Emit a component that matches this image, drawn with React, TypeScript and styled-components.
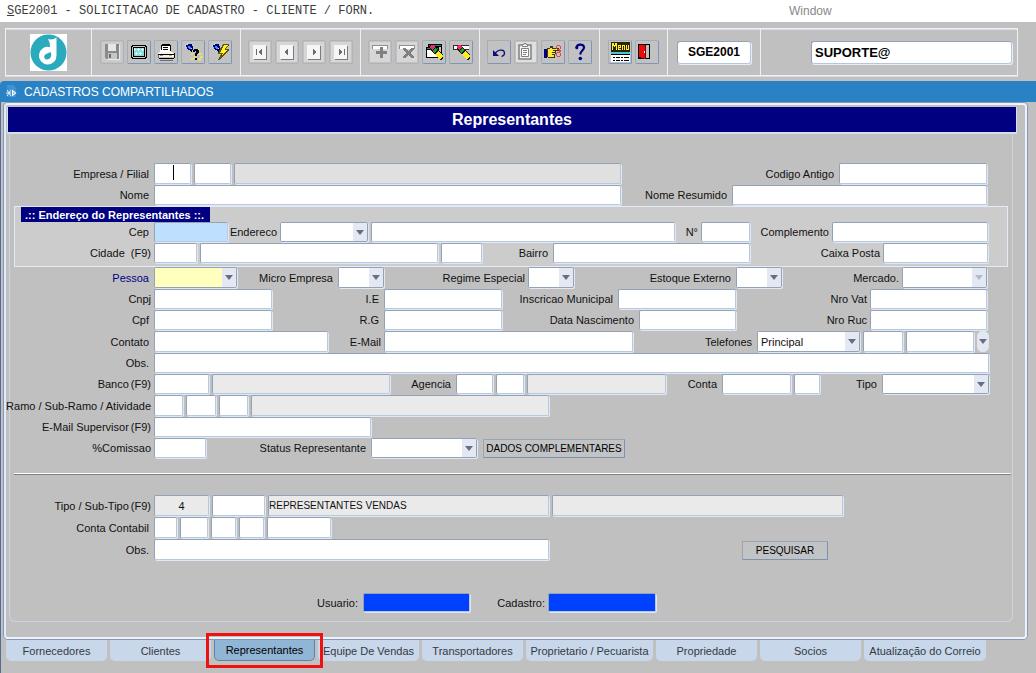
import React from "react";
import styled, { createGlobalStyle, css } from "styled-components";

const GlobalStyle = createGlobalStyle`
  *, *::before, *::after { box-sizing: border-box; }
  body {
    margin: 0;
    background: #c0c0c0;
    color: #111;
    font: 11px/14px "Liberation Sans", Arial, sans-serif;
  }
  input, select, button { font: inherit; color: inherit; margin: 0; }
`;

const Screen = styled.div`
  display: flex;
  flex-direction: column;
  min-height: 100vh;
`;

/* ---------- menu and toolbar ---------- */

const MenuBar = styled.nav`
  display: flex;
  align-items: center;
  height: 22px;
  padding-left: 7px;
  background: #fff;
`;

const ProgramName = styled.span`
  flex: 0 0 782px;
  color: #3c3c3c;
  font: 12px/14px "Liberation Mono", "Courier New", monospace;
`;

const MenuItem = styled.button`
  padding: 0;
  border: 0;
  background: none;
  color: #888;
  font-size: 12px;
`;

const Toolbar = styled.header`
  padding: 6px 18px 5px 5px;
`;

const ToolFrame = styled.div`
  display: flex;
  height: 48px;
  border: 1px solid #eef2f8;
  box-shadow: 0 1px 0 #d6dde6, inset 0 1px 0 #d6dde6;
`;

const ToolCell = styled.div<{ $w?: number; $end?: boolean }>`
  display: flex;
  align-items: center;
  justify-content: ${(p) => (p.$end ? "flex-end" : "center")};
  gap: 3px;
  flex: ${(p) => (p.$w ? `0 0 ${p.$w}px` : "1")};
  padding-right: ${(p) => (p.$end ? 5 : 0)}px;
  border-right: 1px solid #eef2f8;
  &:last-child { border-right: 0; }
`;

const ToolButton = styled.button`
  width: 24px;
  height: 24px;
  padding: 0;
  border: 1px solid;
  border-color: #a3adb8 #7d95b8 #7d95b8 #a3adb8;
  border-radius: 2px;
  background: #c2c2c2;
  svg { display: block; width: 22px; height: 22px; }
  &:disabled { border-color: #b0b4b9; }
`;

const ToolInput = styled.input<{ $w: number; $center?: boolean }>`
  width: ${(p) => p.$w}px;
  height: 23px;
  padding: 0 3px;
  border: 1px solid;
  border-color: #94a3b8 #b5c7e0 #b5c7e0 #94a3b8;
  border-radius: 3px;
  box-shadow: 1px 1px 0 #e8eef6;
  background: #fff;
  color: #000;
  font-weight: bold;
  font-size: ${(p) => (p.$center ? 12 : 13)}px;
  text-align: ${(p) => (p.$center ? "center" : "left")};
`;

/* ---------- window ---------- */

const WindowTitle = styled.div`
  display: flex;
  align-items: center;
  gap: 7px;
  height: 21px;
  padding-left: 6px;
  border-top-left-radius: 4px;
  background: #2a82c4;
  color: #fff;
  font-size: 12px;
`;

const Workspace = styled.main`
  flex: 1;
  padding: 1px 9px 0 3px;
  border-left: 1px solid #566b91;
`;

const Panel = styled.section`
  padding: 2px 0 15px 2px;
  border: 2px solid #eef3fa;
  border-left-color: #e2eaf5;
  border-radius: 4px;
  box-shadow: 0 0 0 1px #8298b6;
`;

const PanelTitle = styled.h1`
  height: 25px;
  margin: 0 9px 0 0;
  background: #000080;
  box-shadow: 0 1px 0 1px #d5def0;
  color: #fff;
  font-size: 16px;
  line-height: 25px;
  text-align: center;
`;

const Form = styled.form`
  margin: 1px 12px 0 1px;
  padding: 30px 0 8px;
  border: 1px solid #c9d4e0;
  border-top: 0;
  border-radius: 0 0 6px 6px;
`;

const Row = styled.div<{ $tall?: boolean; $wide?: boolean }>`
  display: flex;
  gap: 3px;
  height: ${(p) => (p.$tall ? 22 : 21)}px;
  padding: 0 ${(p) => (p.$wide ? 23 : 25)}px 1px 0;
`;

const Label = styled.label<{ $w?: number; $tone?: string; $tight?: boolean }>`
  display: flex;
  align-items: center;
  justify-content: flex-end;
  gap: 6px;
  flex: ${(p) => (p.$w ? `0 0 ${p.$w}px` : "1")};
  min-width: 0;
  padding-right: ${(p) => (p.$tight ? 0 : 2)}px;
  color: ${(p) => p.$tone ?? "#111"};
  white-space: nowrap;
`;

const Shortcut = styled.span`
  margin-left: -4px;
`;

const Lead = styled(Label)`
  flex: 0 0 141px;
`;

const fieldBox = css`
  border: 1px solid;
  border-color: #93a2b6 #b7c8df #b7c8df #93a2b6;
  border-radius: 2px;
  box-shadow: 1px 1px 0 #dfe8f3;
`;

const Field = styled.input<{ $w?: number; $bg?: string; $center?: boolean }>`
  ${fieldBox}
  flex: ${(p) => (p.$w ? `0 0 ${p.$w}px` : "1")};
  min-width: 0;
  height: 100%;
  padding: 0;
  background: ${(p) => p.$bg ?? "#fff"};
  text-align: ${(p) => (p.$center ? "center" : "left")};
  ${(p) => p.$w && `width: ${p.$w}px;`}
`;

const CapsField = styled(Field)`
  font-size: 10px;
`;

const CaretWrap = styled.span`
  position: relative;
  flex: 0 0 37px;
  &::after {
    content: "";
    position: absolute;
    left: 50%;
    top: 2px;
    width: 1px;
    height: 15px;
    background: #000;
  }
`;

const SelectWrap = styled.span<{ $w: number }>`
  ${fieldBox}
  display: grid;
  flex: 0 0 ${(p) => p.$w}px;
  background: #fff;
  border-color: #93a2b6;
`;

const SelectBox = styled.select<{ $bg?: string }>`
  grid-area: 1 / 1;
  width: 100%;
  min-width: 0;
  padding: 0 16px 0 3px;
  border: 0;
  appearance: none;
  background: ${(p) => p.$bg ?? "#fff"};
  &:disabled { opacity: 1; }
`;

const ArrowBox = styled.span`
  grid-area: 1 / 1;
  justify-self: end;
  display: grid;
  place-items: center;
  width: 14px;
  background: #e4e8f2;
  pointer-events: none;
`;

const AddressBox = styled.fieldset`
  min-width: 0;
  height: 61px;
  margin: 0 4px;
  padding: 0;
  border: 1px solid #e3ebf6;
  background: #ccc;
  ${Row} { padding-right: 19px; }
  ${Lead} { flex-basis: 136px; }
`;

const AddressTitle = styled.div`
  width: max-content;
  height: 15px;
  margin-left: 6px;
  padding: 0 6px 0 4px;
  background: #000080;
  color: #fff;
  font-weight: bold;
  line-height: 16px;
`;

const PlainButton = styled.button<{ $w: number; $left: number }>`
  flex: 0 0 ${(p) => p.$w}px;
  align-self: flex-end;
  height: 19px;
  margin-left: ${(p) => p.$left}px;
  padding: 0;
  border: 1px solid;
  border-color: #9ba5af #7d93b0 #7d93b0 #9ba5af;
  border-radius: 1px;
  background: #c2c3c5;
  color: #000;
  font-size: 10px;
  white-space: nowrap;
`;

const MoreButton = styled.button`
  display: grid;
  place-items: center;
  flex: 0 0 12px;
  padding: 0;
  border: 1px solid #dfe6f0;
  border-radius: 5px;
  background: #e4e8f2;
`;

const Divider = styled.hr`
  height: 2px;
  margin: 14px 1px 20px 4px;
  border: 0;
  border-top: 1px solid #fff;
  background: #808080;
`;

const AuditRow = styled(Row)`
  height: 20px;
  margin-top: 32px;
`;

const Tabs = styled.div`
  display: flex;
  gap: 3px;
  padding: 1px 0 0 2px;
`;

const Tab = styled.button<{ $w?: number; $active?: boolean }>`
  flex: 0 1 ${(p) => p.$w ?? 101}px;
  height: 21px;
  padding: 0;
  border: 0;
  border-radius: 0 0 5px 5px;
  background: #c8d7e9;
  color: #333a44;
  white-space: nowrap;
  ${(p) =>
    p.$active &&
    css`
      position: relative;
      z-index: 1;
      border: 1px solid #5f83a8;
      border-top: 0;
      background: #91b5d5;
      color: #000;
    `}
`;

const Highlight = styled.span`
  position: absolute;
  inset: -7px -9px -8px;
  border: 3px solid #ee1111;
  pointer-events: none;
`;

/* ---------- drawings ---------- */

const Arrow = ({ off }: { off?: boolean }) => (
  <svg width="8" height="5" viewBox="0 0 8 5" aria-hidden="true">
    <path d="M0 0H8L4 5Z" fill={off ? "#b4b9c4" : "#646e84"} />
  </svg>
);

const Logo = () => (
  <svg width="37" height="37" viewBox="0 0 37 37" aria-label="Logo">
    <rect width="37" height="37" fill="#fff" />
    <circle cx="18.500" cy="18.500" r="18" fill="#2ba9bd" />
    <path d="M18 5C20.500 6 24 5.500 26.500 3.500V21A8.800 8.800 0 1 1 20 13.200Q20 8 18 5Z" fill="#fff" />
    <path d="M20.500 18C22.500 21.500 20.500 25.500 17 25.500C14.500 25.500 13.500 23 14.800 21C16 19.200 18.500 19.500 20.500 18Z" fill="#2ba9bd" />
  </svg>
);

const WindowMark = () => (
  <svg width="11" height="15" viewBox="0 0 11 15" aria-hidden="true">
    <path d="M1 1H7L10 4V13H1Z" fill="#3f93d2" />
    <path d="M1 6L5 12M5 6L1 12M0 9H5" stroke="#dff0ff" fill="none" />
    <path d="M6 5.500L10.500 9L6 12.500Z" fill="#fff" />
    <path d="M7 8.500H8.500V9.500H7Z" fill="#2a82c4" />
  </svg>
);

const Pixels = ({ children }: { children: React.ReactNode }) => (
  <svg viewBox="0 0 22 22" shapeRendering="crispEdges" aria-hidden="true">
    {children}
  </svg>
);

const Torch = () => (
  <>
    <path d="M4 4H6V3H9V5H11V9H10V10H8V9H6V8H5V6H4Z" fill="#000080" />
    <path d="M6 5H8V6H9V8H7V7H6Z" fill="#3f8cff" />
    <path d="M9 3H10V5H9ZM8 9H10V11H9V10H8Z" fill="#000" />
    <path d="M3 4H4V6H3ZM5 2H6V4H5ZM9 7H10V8H9Z" fill="#bfe4ff" />
  </>
);

const Glow = () => <rect x="1" y="1" width="20" height="20" fill="#d6d6d6" />;

const SaveIcon = () => (
  <Pixels>
    <rect x="1" y="1" width="20" height="20" fill="#cccccc" />
    <path d="M4 3H18V18H5L4 17Z" fill="#8a8a8a" />
    <path d="M7 3H15V10H7Z" fill="#e6e6e6" />
    <path d="M7 12H16V18H7Z" fill="#c6c6c6" />
    <path d="M8 13H10V17H8ZM16 4H17V5H16Z" fill="#6c6c6c" />
    <path d="M18 4H19V19H6V18H18Z" fill="#e8e8e8" />
  </Pixels>
);

const ScreenIcon = () => (
  <Pixels>
    <path d="M4 4H18V5H19V17H18V18H4V17H3V5H4Z" fill="#000" />
    <path d="M5 5H17V6H18V16H17V17H5V16H4V6H5Z" fill="#c8cccc" />
    <rect x="5" y="6" width="12" height="10" fill="#000" />
    <rect x="6" y="7" width="10" height="8" fill="#8adada" />
    <path d="M6 7h1v1h1v1h-1v1h-1zM10 7h1v1h1v1h-1v1h-1v-1h-1v-1h1zM14 7h1v1h1v1h-1v1h-1v-1h-1v-1h1zM8 11h1v1h1v1h-1v1h-1v-1h-1v-1h1zM12 11h1v1h1v1h-1v1h-1v-1h-1v-1h1z" fill="#d8fafa" />
  </Pixels>
);

const PrintIcon = () => (
  <Pixels>
    <path d="M6 4H15V5H16V12H5V8H6Z" fill="#fff" />
    <path d="M7 3H15V4H16V10H15V5H7V9H6V4H7ZM8 6H13V7H8ZM8 8H13V9H8Z" fill="#000" />
    <path d="M4 11H18V12H19V16H3V12H4Z" fill="#f4f4f4" />
    <path d="M3 13H19V14H3ZM4 17H19V18H4ZM19 12H20V17H19Z" fill="#000" />
    <path d="M5 14H8V15H5Z" fill="#909090" />
    <path d="M14 14H17V15H14Z" fill="#e0b020" />
    <path d="M3 14H4V17H3ZM5 19H18V20H5Z" fill="#707070" />
  </Pixels>
);

const QueryIcon = () => (
  <Pixels>
    <path d="M9 12h2v2h-2zM12 15h2v2h-2zM16 8h2v2h-2zM17 12h3v2h-3zM18 15h3v2h-3zM16 17h3v3h-3zM9 17h3v2h-3z" fill="#e6e070" />
    <Torch />
    <path d="M11 9H12V8H16V9H17V12H16V13H15V15H13V12H14V10H13V11H11ZM13 17H15V19H13Z" fill="#000" />
  </Pixels>
);

const RunQueryIcon = () => (
  <Pixels>
    <Torch />
    <path d="M14 3H20V4L17 8H20V9L10 19H9L12 13H9V12Z" fill="#5c5400" />
    <path d="M15 4H19L16 8V9H18L12 16L14 12H11Z" fill="#ffef2a" />
  </Pixels>
);

const NavIcon = ({ d }: { d: string }) => (
  <Pixels>
    <Glow />
    <path d="M5 5H18V19H5Z" fill="#7c7c7c" />
    <path d="M4 4H17V18H4Z" fill="#f6f6f6" />
    <path d={d} fill="#6c6c6c" />
  </Pixels>
);

const InsertIcon = () => (
  <Pixels>
    <Glow />
    <path d="M3 4H19V8H3Z" fill="#909090" />
    <path d="M4 5H18V8H4Z" fill="#fff" />
    <path d="M11 6H14V10H18V13H14V17H11V13H7V10H11Z" fill="#808080" />
  </Pixels>
);

const RemoveIcon = () => (
  <Pixels>
    <Glow />
    <path d="M3 4H19V8H3Z" fill="#909090" />
    <path d="M4 5H18V8H4Z" fill="#fff" />
    <path d="M7 7H10L12 10L15 7H18V8L14 12L18 16V17H15L12 14L10 17H7V16L10 12L7 8Z" fill="#808080" />
  </Pixels>
);

const Pencil = () => (
  <>
    <path d="M7 4H11L20 14V18L18 19L16 18L7 8Z" fill="#201800" />
    <path d="M8 4H11L12 6L9 9L7 7V5Z" fill="#f0286e" />
    <path d="M12 7L14 9L11 12L9 10Z" fill="#18a040" />
    <path d="M15 10L20 15L18 18H16L12 13Z" fill="#ffee20" />
  </>
);

const ClearRecordIcon = () => (
  <Pixels>
    <path d="M5 3H19V12H5Z" fill="#000" />
    <path d="M6 4H18V5H6Z" fill="#138a78" />
    <path d="M16 6H18V11H16Z" fill="#c8c8c8" />
    <path d="M3 6H16V17H3Z" fill="#000" />
    <path d="M4 7H15V8H4Z" fill="#138a78" />
    <path d="M4 9H15V16H4Z" fill="#fff" />
    <Pencil />
  </Pixels>
);

const ClearFieldIcon = () => (
  <Pixels>
    <path d="M3 4H19V9H3Z" fill="#303030" />
    <path d="M4 5H19V8H4Z" fill="#fff" />
    <Pencil />
  </Pixels>
);

const UndoIcon = () => (
  <svg viewBox="0 0 22 22" aria-hidden="true">
    <path d="M6 13L9 10.500C11 8.500 16.500 8.500 16.500 12C16.500 14 15.500 15 13.500 15.500" fill="none" stroke="#0a0a82" strokeWidth="1.200" />
    <path d="M5 9V15H11Z" fill="#0a0a82" />
  </svg>
);

const ClipboardIcon = () => (
  <svg viewBox="0 0 22 22" aria-hidden="true">
    <rect x="1" y="1" width="20" height="20" fill="#e0e0e0" />
    <path d="M4 4H16V18H4Z" fill="#f0f0f0" stroke="#808080" strokeWidth="1.500" />
    <path d="M7.500 5.500V3.500H9V2.500H11V3.500H12.500V5.500Z" fill="#fff" stroke="#808080" />
    <path d="M6.500 7.500H13.500V15.500H6.500Z" fill="#fff" stroke="#808080" />
    <path d="M8 9.500H12M8 11.500H12M8 13.500H11" stroke="#808080" />
  </svg>
);

const HandIcon = () => (
  <Pixels>
    <path d="M2 8H5V17H2Z" fill="#000080" />
    <path d="M5 7H8V5H11V7H17V10H14V13H13V17H6V16H5Z" fill="#403800" />
    <path d="M6 8H8V7H10V8H16V9H11V10H13V11H10V12H13V13H10V14H12V16H6Z" fill="#ffe93a" />
    <path d="M14 5H15V4H18V5H19V8H18V9H19V11H18V12H19V15H18V16H15V15H14V12H15V11H17V9H15V8H14ZM15 5V8H18V5ZM15 12V15H18V12Z" fill="#e04848" fillRule="evenodd" />
  </Pixels>
);

const HelpIcon = () => (
  <svg viewBox="0 0 22 22" aria-hidden="true">
    <path d="M7.500 7C7.500 2.500 15 2.500 15 6.500C15 9.500 11.300 9.500 11.300 13.500" fill="none" stroke="#000088" strokeWidth="2.200" />
    <circle cx="7.800" cy="6.800" r="1.500" fill="#000088" />
    <circle cx="11.300" cy="17.500" r="1.800" fill="#000088" />
  </svg>
);

const MenuIcon = () => (
  <Pixels>
    <rect x="2" y="1" width="19" height="10" fill="#2a2600" />
    <path d="M3 2H5V4H6V2H8V9H7V5H6V6H5V5H4V9H3ZM9 4H12V7H10V8H12V9H9ZM13 4H16V9H15V5H14V9H13ZM17 4H18V8H19V4H20V9H17ZM10 5V6H11V5Z" fill="#ffee2a" />
    <rect x="2" y="11" width="19" height="2" fill="#4cc4d4" />
    <rect x="2" y="13" width="19" height="8" fill="#fff" />
    <path d="M2 13H21V14H2ZM4 16H6V17H4ZM7 16H11V17H7ZM12 16H14V17H12ZM15 16H20V17H15ZM4 19H6V20H4ZM7 19H11V20H7ZM12 19H14V20H12ZM15 19H20V20H15Z" fill="#000" />
  </Pixels>
);

const ExitIcon = () => (
  <Pixels>
    <path d="M2 3H14V18H2Z" fill="#000" />
    <path d="M10 4H13V17H10Z" fill="#c0c0c0" />
    <path d="M3 4H9V5H10V18H9L3 16Z" fill="#e80c0c" />
    <path d="M8 10H9V12H8Z" fill="#fff" />
    <path d="M9 5H10V18H9Z" fill="#7c0000" />
  </Pixels>
);

/* ---------- small building blocks ---------- */

type ToolProps = { name: string; disabled?: boolean; children: React.ReactNode };

const Tool = ({ name, disabled, children }: ToolProps) => (
  <ToolButton type="button" aria-label={name} disabled={disabled}>
    {children}
  </ToolButton>
);

type SelectProps = {
  id: string;
  w: number;
  bg?: string;
  disabled?: boolean;
  options?: string[];
};

const Select = ({ id, w, bg, disabled, options = [""] }: SelectProps) => (
  <SelectWrap $w={w}>
    <SelectBox id={id} $bg={bg} disabled={disabled}>
      {options.map((o) => (
        <option key={o}>{o}</option>
      ))}
    </SelectBox>
    <ArrowBox>
      <Arrow off={disabled} />
    </ArrowBox>
  </SelectWrap>
);

const LOCKED = "#eaeaea";

export default function App() {
  return (
    <Screen>
      <GlobalStyle />
      <MenuBar>
        <ProgramName>
          <u>S</u>GE2001 - SOLICITACAO DE CADASTRO - CLIENTE / FORN.
        </ProgramName>
        <MenuItem type="button">Window</MenuItem>
      </MenuBar>

      <Toolbar>
        <ToolFrame>
          <ToolCell $w={86}>
            <Logo />
          </ToolCell>
          <ToolCell $w={149}>
            <Tool name="Salvar" disabled><SaveIcon /></Tool>
            <Tool name="Tela"><ScreenIcon /></Tool>
            <Tool name="Imprimir"><PrintIcon /></Tool>
            <Tool name="Entrar consulta"><QueryIcon /></Tool>
            <Tool name="Executar consulta"><RunQueryIcon /></Tool>
          </ToolCell>
          <ToolCell $w={120}>
            <Tool name="Primeiro" disabled><NavIcon d="M7 8H8V14H7ZM13 8V14H12V13H11V12H10V10H11V9H12V8Z" /></Tool>
            <Tool name="Anterior" disabled><NavIcon d="M12 8V14H11V13H10V12H9V10H10V9H11V8Z" /></Tool>
            <Tool name="Proximo" disabled><NavIcon d="M10 8V14H11V13H12V12H13V10H12V9H11V8Z" /></Tool>
            <Tool name="Ultimo" disabled><NavIcon d="M9 8V14H10V13H11V12H12V10H11V9H10V8ZM14 8H15V14H14Z" /></Tool>
          </ToolCell>
          <ToolCell $w={119}>
            <Tool name="Inserir" disabled><InsertIcon /></Tool>
            <Tool name="Remover" disabled><RemoveIcon /></Tool>
            <Tool name="Limpar registro"><ClearRecordIcon /></Tool>
            <Tool name="Limpar campo"><ClearFieldIcon /></Tool>
          </ToolCell>
          <ToolCell $w={120}>
            <Tool name="Desfazer"><UndoIcon /></Tool>
            <Tool name="Lista" disabled><ClipboardIcon /></Tool>
            <Tool name="Editar"><HandIcon /></Tool>
            <Tool name="Ajuda"><HelpIcon /></Tool>
          </ToolCell>
          <ToolCell $w={68}>
            <Tool name="Menu"><MenuIcon /></Tool>
            <Tool name="Sair"><ExitIcon /></Tool>
          </ToolCell>
          <ToolCell $w={93}>
            <ToolInput $w={74} $center aria-label="Programa" defaultValue="SGE2001" />
          </ToolCell>
          <ToolCell $end>
            <ToolInput $w={201} aria-label="Usuario conectado" defaultValue="SUPORTE@" />
          </ToolCell>
        </ToolFrame>
      </Toolbar>

      <WindowTitle>
        <WindowMark />
        CADASTROS COMPARTILHADOS
      </WindowTitle>

      <Workspace>
        <Panel>
          <PanelTitle>Representantes</PanelTitle>
          <Form>
            <Row $tall>
              <Lead htmlFor="empresa">Empresa / Filial</Lead>
              <CaretWrap>
                <Field id="empresa" $w={37} />
              </CaretWrap>
              <Field $w={37} aria-label="Filial" />
              <Field $bg="#e0e0e0" aria-label="Nome da empresa" readOnly />
              <Label $w={212} htmlFor="codigo">Codigo Antigo</Label>
              <Field id="codigo" $w={148} />
            </Row>
            <Row>
              <Lead htmlFor="nome">Nome</Lead>
              <Field id="nome" />
              <Label $w={105} htmlFor="resumido">Nome Resumido</Label>
              <Field id="resumido" $w={255} />
            </Row>

            <AddressBox>
              <AddressTitle>.:: Endereço do Representantes ::.</AddressTitle>
              <Row>
                <Lead htmlFor="cep">Cep</Lead>
                <Field id="cep" $w={74} $bg="#bfdfff" />
                <Label $w={46} $tight htmlFor="endereco">Endereco</Label>
                <Select id="endereco" w={88} />
                <Field aria-label="Logradouro" />
                <Label $w={20} $tight htmlFor="numero">N°</Label>
                <Field id="numero" $w={49} />
                <Label $w={76} $tight htmlFor="complemento">Complemento</Label>
                <Field id="complemento" $w={156} />
              </Row>
              <Row>
                <Lead $tight htmlFor="cidade">Cidade <span>(F9)</span></Lead>
                <Field id="cidade" $w={43} />
                <Field aria-label="Nome da cidade" />
                <Field $w={41} aria-label="UF" />
                <Label $w={65} htmlFor="bairro">Bairro</Label>
                <Field id="bairro" $w={197} />
                <Label $w={127} $tight htmlFor="caixa">Caixa Posta</Label>
                <Field id="caixa" $w={105} />
              </Row>
            </AddressBox>

            <Row $tall>
              <Lead $tone="#000080" htmlFor="pessoa">Pessoa</Lead>
              <Select id="pessoa" w={83} bg="#ffffbe" />
              <Label $w={95} htmlFor="micro">Micro Empresa</Label>
              <Select id="micro" w={46} />
              <Label $w={138} $tight htmlFor="regime">Regime Especial</Label>
              <Select id="regime" w={46} />
              <Label $w={156} htmlFor="estoque">Estoque Externo</Label>
              <Select id="estoque" w={46} />
              <Label $tight htmlFor="mercado">Mercado.</Label>
              <Select id="mercado" w={85} disabled />
            </Row>
            <Row>
              <Lead $tight htmlFor="cnpj">Cnpj</Lead>
              <Field id="cnpj" $w={118} />
              <Label $w={106} htmlFor="ie">I.E</Label>
              <Field id="ie" $w={118} />
              <Label $w={110} htmlFor="municipal">Inscricao Municipal</Label>
              <Field id="municipal" $w={118} />
              <Label $tight htmlFor="vat">Nro Vat</Label>
              <Field id="vat" $w={117} />
            </Row>
            <Row>
              <Lead htmlFor="cpf">Cpf</Lead>
              <Field id="cpf" $w={118} />
              <Label $w={106} htmlFor="rg">R.G</Label>
              <Field id="rg" $w={118} />
              <Label $w={131} htmlFor="nascimento">Data Nascimento</Label>
              <Field id="nascimento" $w={97} />
              <Label $tight htmlFor="ruc">Nro Ruc</Label>
              <Field id="ruc" $w={117} />
            </Row>
            <Row $tall $wide>
              <Lead htmlFor="contato">Contato</Lead>
              <Field id="contato" $w={174} />
              <Label $w={50} $tight htmlFor="email">E-Mail</Label>
              <Field id="email" />
              <Label $w={118} htmlFor="telefones">Telefones</Label>
              <Select id="telefones" w={103} options={["Principal"]} />
              <Field $w={40} aria-label="DDD" />
              <Field $w={68} aria-label="Numero do telefone" />
              <MoreButton type="button" aria-label="Mais telefones"><Arrow /></MoreButton>
            </Row>
            <Row $wide>
              <Lead htmlFor="obs">Obs.</Lead>
              <Field id="obs" />
            </Row>
            <Row $wide>
              <Lead $tight htmlFor="banco">Banco <Shortcut>(F9)</Shortcut></Lead>
              <Field id="banco" $w={55} />
              <Field $bg={LOCKED} aria-label="Nome do banco" readOnly />
              <Label $w={60} htmlFor="agencia">Agencia</Label>
              <Field id="agencia" $w={37} />
              <Field $w={28} aria-label="Digito da agencia" />
              <Field $w={139} $bg={LOCKED} aria-label="Nome da agencia" readOnly />
              <Label $w={50} htmlFor="conta">Conta</Label>
              <Field id="conta" $w={69} />
              <Field $w={26} aria-label="Digito da conta" />
              <Label $w={56} htmlFor="tipo">Tipo</Label>
              <Select id="tipo" w={107} />
            </Row>
            <Row $tall>
              <Lead $tight htmlFor="ramo">Ramo / Sub-Ramo / Atividade</Lead>
              <Field id="ramo" $w={29} />
              <Field $w={30} aria-label="Sub-Ramo" />
              <Field $w={29} aria-label="Atividade" />
              <Field $w={298} $bg={LOCKED} aria-label="Descricao da atividade" readOnly />
            </Row>
            <Row>
              <Lead $tight htmlFor="supervisor">E-Mail Supervisor <Shortcut>(F9)</Shortcut></Lead>
              <Field id="supervisor" $w={217} />
            </Row>
            <Row>
              <Lead $tight htmlFor="comissao">%Comissao</Lead>
              <Field id="comissao" $w={52} />
              <Label $w={159} htmlFor="status">Status Representante</Label>
              <Select id="status" w={106} />
              <PlainButton type="button" $w={142} $left={3}>DADOS COMPLEMENTARES</PlainButton>
            </Row>

            <Divider />

            <Row $tall>
              <Lead $tight htmlFor="subtipo">Tipo / Sub-Tipo <Shortcut>(F9)</Shortcut></Lead>
              <Field id="subtipo" $w={55} $bg={LOCKED} $center defaultValue="4" />
              <Field $w={53} aria-label="Sub-Tipo" />
              <CapsField $w={281} $bg={LOCKED} aria-label="Descricao do tipo" defaultValue="REPRESENTANTES VENDAS" />
              <Field $w={291} $bg={LOCKED} aria-label="Descricao do sub-tipo" readOnly />
            </Row>
            <Row $tall>
              <Lead htmlFor="contabil">Conta Contabil</Lead>
              <Field id="contabil" $w={23} />
              <Field $w={28} aria-label="Conta nivel 2" />
              <Field $w={25} aria-label="Conta nivel 3" />
              <Field $w={25} aria-label="Conta nivel 4" />
              <Field $w={64} aria-label="Conta nivel 5" />
            </Row>
            <Row $tall>
              <Lead htmlFor="obs2">Obs.</Lead>
              <Field id="obs2" $w={395} />
              <PlainButton type="button" $w={86} $left={190}>PESQUISAR</PlainButton>
            </Row>
            <AuditRow>
              <Label $w={350} htmlFor="usuario">Usuario:</Label>
              <Field id="usuario" $w={107} $bg="#0040ff" readOnly />
              <Label $w={72} $tight htmlFor="cadastro">Cadastro:</Label>
              <Field id="cadastro" $w={108} $bg="#0040ff" readOnly />
            </AuditRow>
          </Form>
        </Panel>

        <Tabs role="tablist">
          <Tab role="tab">Fornecedores</Tab>
          <Tab role="tab">Clientes</Tab>
          <Tab role="tab" $active aria-selected>
            Representantes
            <Highlight />
          </Tab>
          <Tab role="tab">Equipe De Vendas</Tab>
          <Tab role="tab">Transportadores</Tab>
          <Tab role="tab" $w={127}>Proprietario / Pecuarista</Tab>
          <Tab role="tab">Propriedade</Tab>
          <Tab role="tab">Socios</Tab>
          <Tab role="tab" $w={122}>Atualização do Correio</Tab>
        </Tabs>
      </Workspace>
    </Screen>
  );
}
